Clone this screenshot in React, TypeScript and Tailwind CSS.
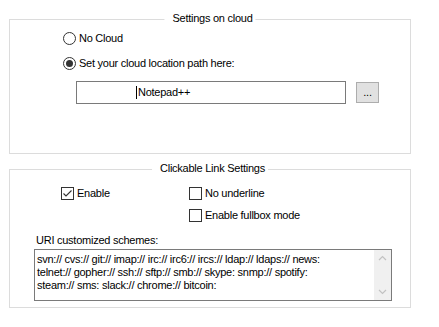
import React from "react";

function Radio({ checked, label }: { checked?: boolean; label: string }) {
  return (
    <div className="flex items-center h-[13px] ml-[53px]">
      <div className="w-[13px] h-[13px] rounded-full border border-[#333333] bg-white flex items-center justify-center">
        {checked && <div className="w-[7px] h-[7px] rounded-full bg-[#333333]" />}
      </div>
      <span className="ml-[3px] leading-[13px]">{label}</span>
    </div>
  );
}

function Check({ checked, label }: { checked?: boolean; label: string }) {
  return (
    <div className="flex items-center h-[13px]">
      <div className="w-[13px] h-[13px] border border-[#333333] bg-white flex items-center justify-center">
        {checked && (
          <svg width="11" height="11" viewBox="0 0 11 11">
            <path d="M1.5 5.5 L4 8 L9.5 2.5" fill="none" stroke="#333333" strokeWidth="1.1" />
          </svg>
        )}
      </div>
      <span className="ml-[3px] leading-[13px]">{label}</span>
    </div>
  );
}

function Group({ title, className, children }: { title: string; className: string; children: React.ReactNode }) {
  return (
    <div className={"relative border border-[#dcdcdc] " + className}>
      <span className="absolute left-1/2 -translate-x-1/2 top-[-8px] bg-white pl-[8px] pr-[3px] leading-[13px] whitespace-nowrap">
        {title}
      </span>
      {children}
    </div>
  );
}

export default function App() {
  return (
    <div
      className="w-[439px] h-[327px] bg-white text-black text-[11px] tracking-[-0.25px] pt-[19px] px-[9px] overflow-hidden"
      style={{ fontFamily: '"Liberation Sans", Arial, sans-serif' }}
    >
      <Group title="Settings on cloud" className="w-[402px] h-[135px] pt-[12px] flex flex-col">
        <Radio label="No Cloud" />
        <div className="h-[12px]" />
        <Radio checked label="Set your cloud location path here:" />
        <div className="flex items-center mt-[11px] ml-[66px]">
          <div className="w-[270px] h-[23px] border border-[#7a7a7a] bg-white flex items-center pl-[59px]">
            <span className="w-px h-[13px] bg-black mr-px" />
            <span>Notepad++</span>
          </div>
          <div className="ml-[10px] w-[23px] h-[21px] border border-[#adadad] bg-[#e1e1e1] flex items-center justify-center leading-none">
            ...
          </div>
        </div>
      </Group>
      <Group title="Clickable Link Settings" className="mt-[15px] w-[402px] h-[139px] pt-[17px] flex flex-col">
        <div className="grid grid-cols-[128px_1fr] ml-[51px] gap-y-[9px]">
          <Check checked label="Enable" />
          <Check label="No underline" />
          <div />
          <Check label="Enable fullbox mode" />
        </div>
        <div className="ml-[26px] mt-[12px] leading-[13px]">URI customized schemes:</div>
        <div className="ml-[24px] mt-[2px] w-[358px] h-[52px] border border-[#7a7a7a] bg-white flex">
          <div className="flex-1 pl-[2px] pt-[3px] leading-[13px] whitespace-nowrap overflow-hidden">
            <div>svn:// cvs:// git:// imap:// irc:// irc6:// ircs:// ldap:// ldaps:// news:</div>
            <div>telnet:// gopher:// ssh:// sftp:// smb:// skype: snmp:// spotify:</div>
            <div>steam:// sms: slack:// chrome:// bitcoin:</div>
          </div>
          <div className="w-[17px] bg-[#f0f0f0] flex flex-col justify-between items-center py-[5px]">
            <svg width="9" height="6" viewBox="0 0 9 6">
              <path d="M1 5 L4.5 1.5 L8 5" fill="none" stroke="#c2c2c2" strokeWidth="1.2" />
            </svg>
            <svg width="9" height="6" viewBox="0 0 9 6">
              <path d="M1 1 L4.5 4.5 L8 1" fill="none" stroke="#c2c2c2" strokeWidth="1.2" />
            </svg>
          </div>
        </div>
      </Group>
    </div>
  );
}
